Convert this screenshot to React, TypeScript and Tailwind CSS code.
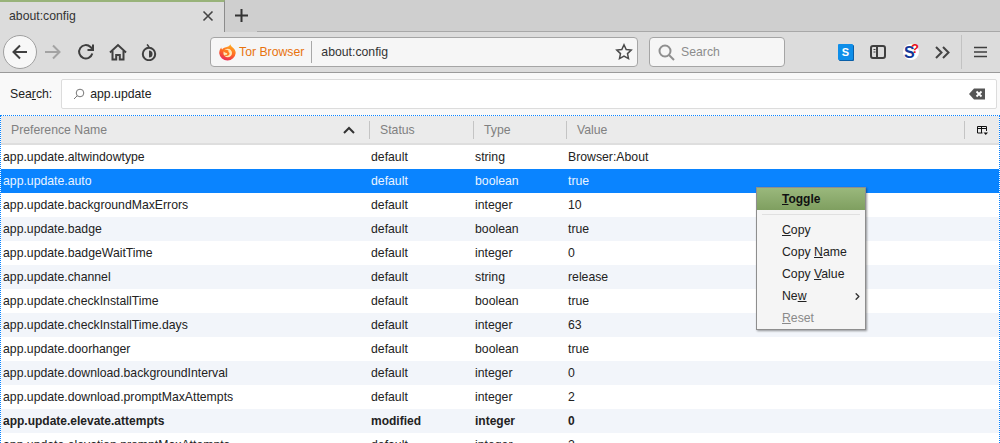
import { ChevronRight } from 'lucide-react';

const rows = [
  ['app.update.altwindowtype', 'default', 'string', 'Browser:About'],
  ['app.update.auto', 'default', 'boolean', 'true'],
  ['app.update.backgroundMaxErrors', 'default', 'integer', '10'],
  ['app.update.badge', 'default', 'boolean', 'true'],
  ['app.update.badgeWaitTime', 'default', 'integer', '0'],
  ['app.update.channel', 'default', 'string', 'release'],
  ['app.update.checkInstallTime', 'default', 'boolean', 'true'],
  ['app.update.checkInstallTime.days', 'default', 'integer', '63'],
  ['app.update.doorhanger', 'default', 'boolean', 'true'],
  ['app.update.download.backgroundInterval', 'default', 'integer', '0'],
  ['app.update.download.promptMaxAttempts', 'default', 'integer', '2'],
  ['app.update.elevate.attempts', 'modified', 'integer', '0'],
  ['app.update.elevation.promptMaxAttempts', 'default', 'integer', '2'],
];

function NavIcon({ children, className = '' }: { children: React.ReactNode; className?: string }) {
  return (
    <svg width="18" height="18" viewBox="0 0 18 18" fill="none" stroke="#3f3f3f" strokeWidth="2" className={className}>
      {children}
    </svg>
  );
}

function FirefoxLogo() {
  return (
    <svg width="17" height="17" viewBox="0 0 17 17">
      <defs>
        <linearGradient id="ff" x1="0.7" y1="0" x2="0.3" y2="1">
          <stop offset="0" stopColor="#ffb01f" />
          <stop offset="0.5" stopColor="#ff6a24" />
          <stop offset="1" stopColor="#e8265a" />
        </linearGradient>
      </defs>
      <path d="M11.500 .3c0 1.500 1 2.200 2.200 3.200 1.500 1.300 3 3 3 5.500a8.300 8.300 0 0 1-16.500.3C.2 7 1 5 2.300 3.500c0 1 .3 1.600.9 2.100C4 4 5.500 3.500 7 3.300 9 2.800 10.800 2 11.500 .3z" fill="url(#ff)" />
      <circle cx="8.700" cy="9" r="4.300" fill="#ffe9b8" />
      <path d="M4.500 6.500c1.500-.8 3.500-1 4.800 0 .7.600.5 1.200-.5 1.300 1.500.4 2.500 1.800 1.200 3.200-1.300 1.300-3.800 1.400-5.500-.2 2 .5 3.800 0 3.800-1 0-.8-1.500-.8-2.500-1.300-.7-.4-1-1.200-1.300-2z" fill="#ff7a1f" />
    </svg>
  );
}

export default function App() {
  return (
    <div className="relative h-[443px] w-[1000px] overflow-hidden bg-white font-['Liberation_Sans',Arial,sans-serif] text-[12.25px] text-[#222]">
      {/* tab strip */}
      <div className="flex h-[32px] bg-[#cfcfcf]">
        <div className="flex h-[32px] w-[225px] items-center justify-between border-t-2 border-r border-t-[#99b37a] border-r-[#8c8c8c] bg-[#dcdcdc] pr-[10px] pb-[2px] pl-[9px] text-[#333]">
          <span>about:config</span>
          <svg width="12" height="12" viewBox="0 0 12 12" stroke="#444" strokeWidth="1.600">
            <path d="M1.500 1.500l9 9M10.500 1.500l-9 9" />
          </svg>
        </div>
        <div className="flex w-[32px] items-center justify-center pb-[2px]">
          <svg width="15" height="15" viewBox="0 0 15 15" stroke="#333" strokeWidth="2">
            <path d="M7.500 1v13M1 7.500h13" />
          </svg>
        </div>
        <div className="flex-1 border-b border-[#a8a8a8]" />
      </div>

      {/* nav bar */}
      <div className="flex h-[41px] items-center border-b border-[#9a9a9a] bg-[#dcdcdc]">
        <div className="ml-[3px] flex h-[34px] w-[34px] items-center justify-center rounded-full border border-[#a0a0a0] bg-[#f7f7f7]">
          <NavIcon>
            <path d="M16 9H2.500M9 2.500L2.500 9 9 15.500" />
          </NavIcon>
        </div>
        <NavIcon className="ml-[7px]">
          <path d="M1 9h14.500M9 2.500L15.500 9 9 15.500" stroke="#a3a3a3" />
        </NavIcon>
        <NavIcon className="ml-[15px]">
          <path d="M15.300 10.500A6.700 6.700 0 1 1 13.500 4L15.500 6M16 1.500V7h-5.500" />
        </NavIcon>
        <NavIcon className="ml-[14px]">
          <path d="M1 9.500L9 2l8 7.500" />
          <path d="M3.500 8v8.500h3.700V12h3.600v4.500h3.700V8" />
        </NavIcon>
        <svg width="16" height="17" viewBox="0 0 16 17" className="ml-[14px]">
          <circle cx="8" cy="10" r="6.200" fill="none" stroke="#3f3f3f" strokeWidth="2" />
          <path d="M8 6.500a3.500 3.500 0 0 1 0 7z" fill="#3f3f3f" />
          <path d="M8 3.500c-.3-1-.8-2-2-3" fill="none" stroke="#3f3f3f" strokeWidth="1.600" />
        </svg>

        {/* url bar */}
        <div className="ml-[53px] flex h-[30px] w-[428px] items-center rounded-[4px] border border-[#a5a5a5] bg-[#f6f6f6]">
          <div className="ml-[8px]">
            <FirefoxLogo />
          </div>
          <span className="ml-[3px] text-[#e8730e]">Tor Browser</span>
          <div className="ml-[7px] h-[22px] w-px bg-[#a8a8a8]" />
          <span className="ml-[9px] text-[#333]">about:config</span>
          <svg width="18" height="18" viewBox="0 0 18 18" fill="none" stroke="#4a4a4a" strokeWidth="1.500" className="mr-[4px] ml-auto">
            <path d="M9 1.800l2.200 4.700 5 .6-3.700 3.500 1 5L9 13.100l-4.500 2.500 1-5L1.800 7.100l5-.6z" />
          </svg>
        </div>

        {/* search */}
        <div className="ml-[11px] flex h-[30px] w-[136px] items-center rounded-[4px] border border-[#a5a5a5] bg-[#f6f6f6]">
          <svg width="17" height="17" viewBox="0 0 17 17" fill="none" stroke="#8f8f8f" strokeWidth="2" className="ml-[8px]">
            <circle cx="7" cy="7" r="5.500" />
            <path d="M11 11l5 5" />
          </svg>
          <span className="ml-[6px] text-[#8c8c8c]">Search</span>
        </div>

        {/* toolbar icons */}
        <div className="relative ml-[53px] h-[16px] w-[15px] rounded-[1px] bg-[#0e8ee9] shadow-[1px_1px_0_#0a5fa8]">
          <span className="absolute inset-0 flex items-center justify-center text-[11px] leading-none font-bold text-white">S</span>
        </div>
        <svg width="16" height="14" viewBox="0 0 16 14" fill="none" stroke="#3f3f3f" className="ml-[17px]">
          <rect x="1" y="1" width="14" height="12" rx="2" strokeWidth="2" />
          <path d="M7 1v12" strokeWidth="2" />
          <path d="M3.500 4.500h2M3.500 7h2" strokeWidth="1" />
        </svg>
        <div className="relative ml-[17px] h-[16px] w-[16px] rounded-full bg-white">
          <span className="absolute top-[1px] left-[1px] text-[16px] leading-none font-bold text-[#12389a]">S</span>
          <span className="absolute top-[-2px] left-[8px] text-[13px] leading-none font-bold text-[#e8101a]">?</span>
        </div>
        <svg width="15" height="13" viewBox="0 0 15 13" fill="none" stroke="#444" strokeWidth="2" className="ml-[16px]">
          <path d="M1 1l5.500 5.500L1 12M8 1l5.500 5.500L8 12" />
        </svg>
        <div className="ml-[11px] h-[34px] w-px bg-[#c2c2c2]" />
        <svg width="13" height="12" viewBox="0 0 13 12" stroke="#3f3f3f" strokeWidth="1.600" className="ml-[12px]">
          <path d="M0 1.500h13M0 6h13M0 10.500h13" />
        </svg>
      </div>

      {/* filter row */}
      <div className="flex h-[42px] items-center bg-[#f9f9f9] pr-[3px] pl-[10px]">
        <span className="mr-[9px]">
          Sea<span className="underline">r</span>ch:
        </span>
        <div className="flex h-[30px] flex-1 items-center rounded-[2px] border border-[#dcdcdc] bg-white pr-[11px] pl-[11px]">
          <svg width="12" height="12" viewBox="0 0 12 12" fill="none" stroke="#777" className="mr-[5px]">
            <circle cx="7" cy="5" r="3.800" />
            <path d="M4.200 7.800L1 11" />
          </svg>
          <span>app.update</span>
          <svg width="16" height="12" viewBox="0 0 16 12" className="ml-auto">
            <path d="M5 0.500H16v11H5L0 6z" fill="#555" />
            <path d="M7.500 3.500l5 5M12.500 3.500l-5 5" stroke="#fff" strokeWidth="1.800" />
          </svg>
        </div>
      </div>

      {/* prefs table */}
      <div className="h-[328px] border-x border-t border-dotted border-[#0a84ff]">
        <div className="flex h-[29px] items-center border-b-2 border-[#dedede] bg-[#ebebeb] pt-px text-[#808080]">
          <div className="flex h-[18px] w-[368px] items-center justify-between pr-[14px] pl-[10px]">
            <span>Preference Name</span>
            <svg width="12" height="8" viewBox="0 0 12 8" fill="none" stroke="#333" strokeWidth="2">
              <path d="M1 7l5-5 5 5" />
            </svg>
          </div>
          <div className="flex h-[18px] w-[104px] items-center border-l border-[#c4c4c4] pl-[10px]">Status</div>
          <div className="flex h-[18px] w-[93px] items-center border-l border-[#c4c4c4] pl-[10px]">Type</div>
          <div className="flex h-[18px] w-[398px] items-center border-l border-[#c4c4c4] pl-[10px]">Value</div>
          <div className="flex h-[18px] flex-1 items-center border-l border-[#c4c4c4] pl-[12px]">
            <svg width="11" height="11" viewBox="0 0 11 11" fill="none" stroke="#111">
              <path d="M.5 8V1.500h9V6M.5 3.500h9M4.500 1.500V8M.5 8h5" />
              <path d="M6.500 7.500h4.500L8.750 10z" fill="#111" stroke="none" />
            </svg>
          </div>
        </div>
        {rows.map((r, i) => {
          const selected = i === 1;
          const modified = r[1] === 'modified';
          return (
            <div
              key={r[0]}
              className={`flex h-[24px] items-center ${selected ? 'bg-[#0a84ff] text-[#eaf4ff]' : i % 2 === 1 ? 'bg-[#f2f5fa]' : 'bg-white'} ${modified ? 'text-[12px] font-bold' : ''}`}
            >
              <div className="w-[369px] pl-[2px]">{r[0]}</div>
              <div className="w-[104px] pl-px">{r[1]}</div>
              <div className="w-[93px] pl-px">{r[2]}</div>
              <div className="flex-1 pl-px">{r[3]}</div>
            </div>
          );
        })}
      </div>

      {/* context menu */}
      <div className="absolute top-[187px] left-[756px] w-[110px] border border-[#8e8e8e] bg-[#f5f5f5] shadow-[1px_1px_2px_rgba(0,0,0,0.4)]">
        <div className="flex h-[22px] items-center bg-linear-to-b from-[#9ab87c] to-[#7f9f60] pl-[25px] text-[12px] font-bold text-[#111]">
          <span>
            <span className="underline">T</span>oggle
          </span>
        </div>
        <div className="mx-[5px] my-[4px] h-px bg-[#e0e0e0]" />
        <div className="flex h-[22px] items-center pl-[25px]">
          <span>
            <span className="underline">C</span>opy
          </span>
        </div>
        <div className="flex h-[22px] items-center pl-[25px]">
          <span>
            Copy <span className="underline">N</span>ame
          </span>
        </div>
        <div className="flex h-[22px] items-center pl-[25px]">
          <span>
            Copy <span className="underline">V</span>alue
          </span>
        </div>
        <div className="flex h-[22px] items-center justify-between pr-[2px] pl-[25px]">
          <span>
            Ne<span className="underline">w</span>
          </span>
          <ChevronRight size={11} strokeWidth={3} color="#333" />
        </div>
        <div className="flex h-[22px] items-center pl-[25px] text-[#8a8a8a]">
          <span>
            <span className="underline">R</span>eset
          </span>
        </div>
      </div>
    </div>
  );
}
